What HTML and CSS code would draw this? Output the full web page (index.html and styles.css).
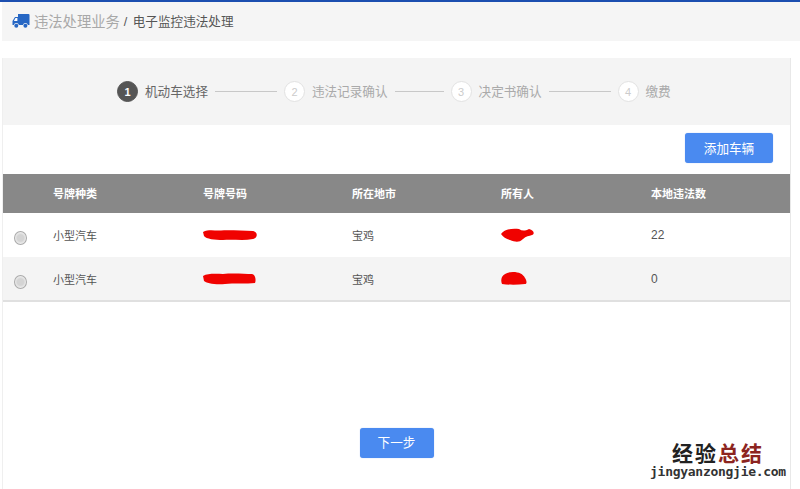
FILE: index.html
```html
<!DOCTYPE html>
<html lang="zh-CN">
<head>
<meta charset="utf-8">
<title>违法处理业务</title>
<link rel="stylesheet" href="styles.css">
</head>
<body>
<div class="topline"></div>
<header class="crumb">
  <svg class="truck" width="18" height="16" viewBox="0 0 18 16"><path fill="#2767c4" d="M6 1h10.500a1 1 0 0 1 1 1v10h-1.600a2.600 2.600 0 0 0-5 0H6.900a2.600 2.600 0 0 0-5.100 0H.5V8L3 4h3z"/><path fill="#fff" d="M3.500 5H5.400v3H1.900z"/><circle cx="4.300" cy="12.800" r="2" fill="#2767c4"/><circle cx="13.400" cy="12.800" r="2" fill="#2767c4"/></svg>
  <span class="crumb-main">违法处理业务</span>
  <span class="crumb-sub">/ 电子监控违法处理</span>
</header>
<main class="panel">
  <ol class="steps">
    <li class="step active"><span class="num">1</span><span class="label">机动车选择</span></li>
    <li class="rule"></li>
    <li class="step"><span class="num">2</span><span class="label">违法记录确认</span></li>
    <li class="rule rule-short"></li>
    <li class="step"><span class="num">3</span><span class="label">决定书确认</span></li>
    <li class="rule"></li>
    <li class="step"><span class="num">4</span><span class="label">缴费</span></li>
  </ol>
  <div class="toolbar"><button class="btn btn-add">添加车辆</button></div>
  <div class="table">
    <div class="row head">
      <span></span><span>号牌种类</span><span>号牌号码</span><span>所在地市</span><span>所有人</span><span>本地违法数</span>
    </div>
    <div class="row r1">
      <span><i class="radio"></i></span><span>小型汽车</span>
      <span><svg class="blot" width="54" height="12" viewBox="0 0 54 12"><path fill="#f00200" d="M0 3C6 0 12 2 18 1.500 28 1 40 2 50 2 55 3 55 9 50 10 40 12 30 10 20 11 12 11 3 10 1 7z"/></svg></span>
      <span>宝鸡</span>
      <span><svg class="blot" width="34" height="15" viewBox="0 0 34 15"><path fill="#f00200" d="M0 6C3 2 9 0 18 1 21 3 24 3 28 1 33 2 34 6 31 7 28 8 25 8 22 11 18 15 14 14 9 12 5 11 2 9 0 6z"/></svg></span>
      <span class="count">22</span>
    </div>
    <div class="row r2">
      <span><i class="radio"></i></span><span>小型汽车</span>
      <span><svg class="blot" width="53" height="12" viewBox="0 0 53 12"><path fill="#f00200" d="M0 3C5 0 14 1 20 1 30 0 42 1 49 1 53 2 53 8 52 10 44 11 30 10 22 11 12 12 3 10 1 8z"/></svg></span>
      <span>宝鸡</span>
      <span><svg class="blot" width="26" height="13" viewBox="0 0 26 13"><path fill="#f00200" d="M1 5C3 2 6 0 12 0 18 0 22 2 24 6 26 9 26 12 24 12 16 13 8 13 1 12 0 10 0 7 1 5z"/></svg></span>
      <span class="count">0</span>
    </div>
  </div>
  <div class="footer"><button class="btn btn-next">下一步</button></div>
</main>
<div class="mark">
  <div class="mark-cn">经验<em>总结</em></div>
  <div class="mark-en">jingyanzongjie.com</div>
</div>
</body>
</html>
```
FILE: styles.css
```css
* { box-sizing: border-box; }
html, body { margin: 0; height: 489px; overflow: hidden; }
body { position: relative; background: #fff; font-family: "Liberation Sans", "Noto Sans CJK SC", sans-serif; color: #555; }
.topline { height: 2px; background: #1c4fb0; }
.crumb { height: 39px; margin: 0 0 0 2px; padding: 0 0 2px 10px; background: #f5f5f5; display: flex; align-items: center; }
.truck { margin-right: 4px; }
.crumb-main { font-size: 14.3px; color: #a8a8a8; margin-right: 4px; }
.crumb-sub { font-size: 12.6px; color: #555; word-spacing: 2px; }
.panel { margin: 17px 0 0 2px; width: 789px; height: 431px; border-right: 1px solid #e8e8e8; border-left: 1px solid #efefef; display: flex; flex-direction: column; }
.steps { list-style: none; margin: 0; height: 67px; background: #f4f4f4; padding: 0 0 0 114px; display: flex; align-items: center; }
.step { display: flex; align-items: center; gap: 7px; font-size: 12.6px; color: #aaa; }
.step.active { color: #666; }
.label { padding-bottom: 2px; }
.num { width: 21px; height: 21px; border-radius: 50%; background: #fff; border: 1px solid #e2e2e2; color: #ccc; font-size: 11px; display: flex; align-items: center; justify-content: center; }
.active .num { background: #555; border-color: #555; color: #fff; font-weight: bold; }
.rule { width: 62px; height: 1px; background: #c8c8c8; margin: 0 7px; }
.rule-short { width: 49px; }
.toolbar { height: 49px; padding: 8px 17px 0 0; display: flex; justify-content: flex-end; align-items: flex-start; }
.btn { border: 0; border-radius: 3px; background: #4a8af0; color: #fff; font: 12.6px "Liberation Sans", "Noto Sans CJK SC", sans-serif; box-shadow: 0 0 1px #8ab0ee; }
.btn-add { width: 88px; height: 30px; padding: 0 0 2px; }
.btn-next { width: 74px; height: 30px; padding: 0 0 4px; }
.row { display: grid; grid-template-columns: 50px 150px 149px 149px 150px 1fr; align-items: center; font-size: 11px; }
.head { height: 39px; padding-bottom: 1px; background: #888; color: #fff; font-weight: bold; }
.r1 { height: 44px; color: #555; }
.r2 { height: 45px; background: #f4f4f4; border-bottom: 2px solid #e0e0e0; color: #555; }
.count { font-size: 12px; }
.radio { display: block; width: 13px; height: 14px; margin: 6px 0 0 11px; border-radius: 50%; border: 1px solid #aaa; background: radial-gradient(circle at 50% 50%, #d4d4d4 0 40%, #f2f2f2 75%); }
.blot { display: block; }
.footer { flex: 1; display: flex; justify-content: center; padding: 126px 0 0 0; align-items: flex-start; }
.mark { position: absolute; right: 14px; bottom: 11px; width: 136px; text-align: center; }
.mark-cn { font: bold 21px/24px "Noto Sans CJK SC", sans-serif; letter-spacing: 2px; color: #222; padding-bottom: 2px; }
.mark-cn em { font-style: normal; color: #8c2420; }
.mark-en { font: bold 13px/12px "DejaVu Sans Mono", monospace; color: #333; white-space: nowrap; letter-spacing: -.28px; }
```
